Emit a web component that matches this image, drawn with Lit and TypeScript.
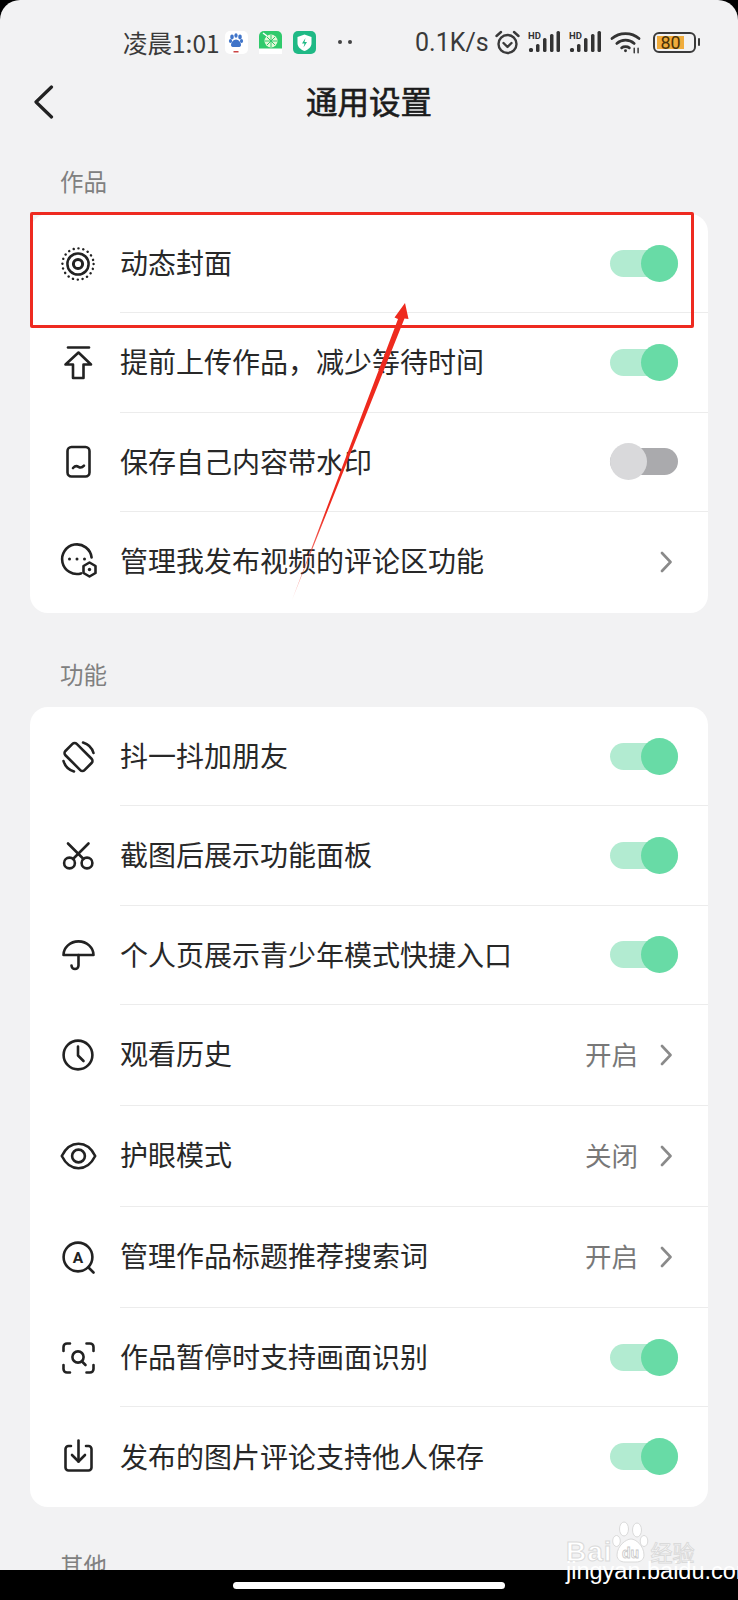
import { LitElement, html, css, svg } from 'lit';
import { customElement, property } from 'lit/decorators.js';

const ICONS: Record<string, unknown> = {
  live: svg`
    <circle cx="20" cy="20" r="15.6" stroke-width="2.4" stroke-dasharray="0.1 4.8" />
    <circle cx="20" cy="20" r="10.6" stroke-width="2.5" />
    <circle cx="20" cy="20" r="4.6" stroke-width="3" />`,
  upload: svg`
    <path d="M10 4.5H31" />
    <path d="M20.5 9.5L7.5 21.5H15V35H25.5V21.5H33Z" />`,
  phone: svg`
    <rect x="9.5" y="5" width="22" height="29.5" rx="4" />
    <path d="M15 26q2.7-3 5.5-1.2t5.5-1.2" />`,
  comment: svg`
    <path d="M23 31.4A14.8 14.8 0 1 1 33.6 15.5" />
    <circle cx="11.5" cy="17" r="1.5" fill="#222" stroke="none" />
    <circle cx="19" cy="17" r="1.5" fill="#222" stroke="none" />
    <circle cx="26.5" cy="17" r="1.5" fill="#222" stroke="none" />
    <path d="M31.5 20.5L37.5 24V31L31.5 34.5L25.5 31V24Z" />
    <circle cx="31.5" cy="27.5" r="1.7" fill="#222" stroke="none" />`,
  shake: svg`
    <rect x="12.5" y="6.5" width="16" height="27" rx="3" transform="rotate(-45 20.5 20)" />
    <path d="M25 5.5A15.5 15.5 0 0 1 35.5 16" />
    <path d="M5.5 24A15.5 15.5 0 0 0 16 34.5" />`,
  scissors: svg`
    <circle cx="11.5" cy="27" r="5.4" />
    <circle cx="29" cy="27" r="5.4" />
    <path d="M15 23L30.5 7.5" />
    <path d="M25.5 23L10 7.5" />`,
  umbrella: svg`
    <path d="M5.5 20A15 13.6 0 0 1 35.5 20Z" />
    <path d="M20.5 20V30.5a3.5 3.5 0 0 1-7 0" />`,
  clock: svg`
    <circle cx="20" cy="20" r="14.4" />
    <path d="M20 11.5V20.5L25.5 26" />`,
  eye: svg`
    <path d="M3.8 20C8 11.5 14 7.8 20.5 7.8S33 11.5 37.2 20C33 28.5 27 32.2 20.5 32.2S8 28.5 3.8 20Z" />
    <circle cx="20.5" cy="20" r="6.4" />`,
  searchA: svg`
    <circle cx="20" cy="20" r="14.4" />
    <path d="M30.5 30.5L35.5 35.5" />
    <text x="20" y="25.5" text-anchor="middle" font-size="15.5" font-weight="700" fill="#222" stroke="none" font-family="Roboto, sans-serif">A</text>`,
  scan: svg`
    <path d="M12 5.5H9a3.5 3.5 0 0 0-3.5 3.5V13" />
    <path d="M28.5 5.5H32a3.5 3.5 0 0 1 3.5 3.5V13" />
    <path d="M12 34.5H9a3.5 3.5 0 0 1-3.5-3.5V27" />
    <path d="M28.5 34.5H32a3.5 3.5 0 0 0 3.5-3.5V27" />
    <circle cx="20" cy="19" r="5.6" />
    <path d="M24 23.5L27.5 27" />`,
  download: svg`
    <path d="M13 9H10.5a3 3 0 0 0-3 3V30.5a3 3 0 0 0 3 3H30.5a3 3 0 0 0 3-3V12a3 3 0 0 0-3-3H28" />
    <path d="M20.5 3.5V24.5" />
    <path d="M14 18L20.5 24.5L27 18" />`,
};

const SIGNAL = svg`
  <text x="0" y="8" font-size="9.5" font-weight="700" fill="#333" font-family="Roboto, sans-serif">HD</text>
  <rect x="1" y="17" width="4" height="4" rx="1.5" />
  <rect x="8" y="13" width="3.5" height="8" rx="1.5" />
  <rect x="15" y="7" width="3.5" height="14" rx="1.5" />
  <rect x="22" y="3" width="3.5" height="18" rx="1.5" />
  <rect x="28.5" y="0" width="3.5" height="21" rx="1.5" />
`;

@customElement('app-switch')
export class AppSwitch extends LitElement {
  static styles = css`
    :host {
      display: block;
    }

    .track {
      position: relative;
      width: 68px;
      height: 27px;
      border-radius: 14px;
      background: #aaaaad;
    }

    .knob {
      position: absolute;
      top: -5px;
      left: 0;
      width: 37px;
      height: 37px;
      border-radius: 50%;
      background: #d9d9db;
    }

    .on {
      background: #b2ebd1;
    }

    .on .knob {
      left: 31px;
      background: #68dba6;
    }
  `;

  @property({ type: Boolean }) on = false;

  render() {
    return html`<div class="track ${this.on ? 'on' : ''}"><div class="knob"></div></div>`;
  }
}

@customElement('app-root')
export class AppRoot extends LitElement {
  static styles = css`
    :host {
      display: block;
      position: relative;
      width: 738px;
      height: 1600px;
      overflow: hidden;
      background: #000;
      font-family: 'Noto Sans CJK SC', 'Noto Sans', sans-serif;
      color: #222;
    }

    .screen {
      height: 1600px;
      overflow: hidden;
      border-radius: 20px;
      background: #f2f2f3;
    }

    .status {
      display: flex;
      align-items: center;
      height: 84px;
      padding-left: 123px;
      color: #3a3a3a;
    }

    .time {
      width: 102px;
      font-size: 24.5px;
      white-space: nowrap;
    }

    .app-icon {
      width: 23px;
      height: 23px;
      margin-right: 11px;
    }

    .dots {
      display: flex;
      gap: 6px;
      margin-left: 11px;
      margin-right: 63px;
    }

    .dots i {
      width: 4px;
      height: 4px;
      border-radius: 50%;
      background: #444;
    }

    .speed {
      width: 80px;
      font-family: Roboto, sans-serif;
      font-size: 25px;
      white-space: nowrap;
    }

    .alarm {
      width: 25px;
      height: 25px;
      margin-right: 8px;
    }

    .signal {
      width: 33px;
      height: 22px;
      margin-right: 8px;
      fill: #333;
    }

    .wifi {
      width: 31px;
      height: 24px;
      margin-right: 12px;
    }

    .battery {
      display: flex;
      align-items: center;
      gap: 2px;
    }

    .battery-body {
      display: flex;
      box-sizing: border-box;
      width: 43px;
      height: 21px;
      padding: 2px;
      border: 2px solid #3a3a3a;
      border-radius: 6px;
    }

    .battery-fill {
      width: 27px;
      background: #f0ac3c;
      color: #4a3208;
      font-family: Roboto, sans-serif;
      font-size: 18px;
      line-height: 13px;
      text-align: center;
      white-space: nowrap;
    }

    .battery-nub {
      width: 2px;
      height: 8px;
      border-radius: 1px;
      background: #3a3a3a;
    }

    .nav {
      position: relative;
      height: 36px;
      margin-bottom: 48px;
      text-align: center;
      font-size: 31.5px;
      line-height: 32px;
      -webkit-text-stroke: 0.6px #1c1c1c;
      color: #1c1c1c;
    }

    .back {
      position: absolute;
      left: 32px;
      top: 1px;
      width: 24px;
      height: 34px;
    }

    .label {
      height: 30px;
      margin-bottom: 16px;
      padding-left: 60px;
      color: #808080;
      font-size: 23.5px;
      line-height: 27px;
    }

    .card {
      margin: 0 30px 48px;
      overflow: hidden;
      border-radius: 18px;
      background: #fff;
    }

    .row {
      display: flex;
      align-items: center;
      gap: 22px;
      height: 99.33px;
      padding-left: 28px;
    }

    .row.link {
      height: 101px;
    }

    .row .icon {
      flex: none;
      width: 40px;
      height: 40px;
      fill: none;
      stroke: #222;
      stroke-width: 2.6;
      stroke-linecap: round;
      stroke-linejoin: round;
    }

    .body {
      display: flex;
      flex: 1;
      align-items: center;
      align-self: stretch;
      box-sizing: border-box;
      padding-right: 30px;
      border-bottom: 1px solid #ececec;
      color: #282828;
      font-size: 28px;
      white-space: nowrap;
    }

    .row:last-child .body {
      border-bottom: none;
    }

    .title {
      flex: 1;
      padding-bottom: 2px;
    }

    .link .title {
      padding-bottom: 4px;
    }

    .value {
      margin-right: 22px;
      padding-bottom: 2px;
      color: #787878;
      font-size: 26.5px;
    }

    .chevron {
      width: 12px;
      height: 22px;
      margin-right: 6px;
      fill: none;
      stroke: #8a8a8a;
      stroke-width: 2.6;
      stroke-linecap: round;
      stroke-linejoin: round;
    }

    .other {
      margin-top: -3px;
    }

    .home-bar {
      position: absolute;
      left: 0;
      right: 0;
      bottom: 0;
      display: flex;
      justify-content: center;
      height: 30px;
      padding-top: 12px;
      box-sizing: border-box;
      background: #000;
    }

    .home-bar i {
      width: 272px;
      height: 7px;
      border-radius: 4px;
      background: #fff;
    }

    .highlight {
      position: absolute;
      left: 30px;
      top: 212px;
      box-sizing: border-box;
      width: 664px;
      height: 116px;
      border: 3px solid #ee2a20;
      border-radius: 2px;
    }

    .arrow {
      position: absolute;
      left: 280px;
      top: 295px;
      width: 140px;
      height: 310px;
    }

    .watermark {
      position: absolute;
      left: 566px;
      top: 1520px;
      width: 134px;
    }

    .mark-line {
      display: flex;
      align-items: flex-end;
      height: 43px;
      color: #fff;
      font-family: 'Liberation Sans', sans-serif;
      font-size: 28px;
      font-weight: 700;
      line-height: 22px;
      letter-spacing: 1px;
      -webkit-text-stroke: 1px #dadada;
    }

    .mark-cjk {
      margin-left: 2px;
      font-family: 'Noto Sans CJK SC', sans-serif;
      font-size: 22px;
      line-height: 24px;
      font-weight: 400;
      letter-spacing: 0;
    }

    .paw {
      flex: none;
      width: 37px;
      height: 42px;
      margin-left: -1px;
    }

    .mark-url {
      color: #fff;
      font-family: 'Liberation Sans', sans-serif;
      font-size: 23.5px;
      line-height: 16px;
      white-space: nowrap;
    }
  `;

  section1 = [
    { icon: 'live', title: '动态封面', on: true },
    { icon: 'upload', title: '提前上传作品，减少等待时间', on: true },
    { icon: 'phone', title: '保存自己内容带水印', on: false },
    { icon: 'comment', title: '管理我发布视频的评论区功能', link: '' },
  ];

  section2 = [
    { icon: 'shake', title: '抖一抖加朋友', on: true },
    { icon: 'scissors', title: '截图后展示功能面板', on: true },
    { icon: 'umbrella', title: '个人页展示青少年模式快捷入口', on: true },
    { icon: 'clock', title: '观看历史', link: '开启' },
    { icon: 'eye', title: '护眼模式', link: '关闭' },
    { icon: 'searchA', title: '管理作品标题推荐搜索词', link: '开启' },
    { icon: 'scan', title: '作品暂停时支持画面识别', on: true },
    { icon: 'download', title: '发布的图片评论支持他人保存', on: true },
  ];

  renderRow(item: { icon: string; title: string; on?: boolean; link?: string }) {
    const isLink = item.link !== undefined;
    return html`
      <div class="row ${isLink ? 'link' : ''}">
        <svg class="icon" viewBox="0 0 40 40">${ICONS[item.icon]}</svg>
        <div class="body">
          <span class="title">${item.title}</span>
          ${isLink
            ? html`<span class="value">${item.link}</span>
                <svg class="chevron" viewBox="0 0 12 22"><path d="M2 2L10.5 11L2 20" /></svg>`
            : html`<app-switch ?on=${item.on}></app-switch>`}
        </div>
      </div>
    `;
  }

  renderStatus() {
    return html`
      <div class="status">
        <span class="time">凌晨1:01</span>
        <svg class="app-icon" viewBox="0 0 23 23">
          <rect width="23" height="23" rx="5" fill="#fff" />
          <g fill="#3f74c9">
            <ellipse cx="7" cy="6" rx="1.8" ry="2.4" />
            <ellipse cx="11" cy="4.5" rx="1.6" ry="2.2" />
            <ellipse cx="15" cy="6" rx="1.8" ry="2.4" />
            <ellipse cx="5.5" cy="10" rx="1.6" ry="2" />
            <ellipse cx="16.5" cy="10" rx="1.6" ry="2" />
            <path d="M11 8.5c2.5 0 5 3 5 5.5 0 1.5-1 2-2.5 2h-5C7 16 6 15.5 6 14c0-2.5 2.5-5.5 5-5.5Z" />
          </g>
          <rect x="8.5" y="20" width="5" height="1.5" fill="#c44" />
        </svg>
        <svg class="app-icon" viewBox="0 0 23 23">
          <rect width="23" height="23" rx="5" fill="#2fca6b" />
          <rect y="17.5" width="23" height="5.5" fill="#fff" />
          <circle cx="12" cy="10" r="6.5" fill="#e4f7d8" />
          <path d="M12 4v12M6 10h12M8 6l8 8M16 6l-8 8" stroke="#2fca6b" stroke-width="1" />
          <path d="M4 2l4 3" stroke="#fff" stroke-width="1.5" />
        </svg>
        <svg class="app-icon" viewBox="0 0 23 23">
          <rect width="23" height="23" rx="5" fill="#1fb985" />
          <path d="M11.5 3.5l7 2.5v6c0 4-3 6.5-7 8-4-1.5-7-4-7-8V6Z" fill="#fff" />
          <path d="M12.5 7l-3.5 5.5h2.5l-1 4 3.5-5.500h-2.500Z" fill="#1fb985" />
        </svg>
        <div class="dots"><i></i><i></i></div>
        <span class="speed">0.1K/s</span>
        <svg class="alarm" viewBox="0 0 25 25" fill="none" stroke="#3a3a3a" stroke-width="2.4" stroke-linecap="round" stroke-linejoin="round">
          <circle cx="12.5" cy="14" r="9" />
          <path d="M8.5 13L12.5 17L16.5 13" />
          <path d="M1.5 6L6 2M23.5 6L19 2" />
        </svg>
        <svg class="signal" viewBox="0 0 33 22">${SIGNAL}</svg>
        <svg class="signal" viewBox="0 0 33 22">${SIGNAL}</svg>
        <svg class="wifi" viewBox="0 0 32 24" fill="none" stroke="#333" stroke-width="2.8" stroke-linecap="round">
          <path d="M2 8.5C9.5 1.5 22.5 1.5 30 8.5" />
          <path d="M7 13.5C12 9 20 9 25 13.5" />
          <path d="M12 18C14 16.5 18 16.5 20 18" />
          <circle cx="16" cy="21" r="1.5" fill="#333" stroke="none" />
          <path d="M25 18.5V23M29 18.5V23" stroke-width="1.5" />
        </svg>
        <div class="battery">
          <div class="battery-body"><div class="battery-fill">80</div></div>
          <div class="battery-nub"></div>
        </div>
      </div>
    `;
  }

  render() {
    return html`
      <div class="screen">
        ${this.renderStatus()}
        <div class="nav">
          <svg class="back" viewBox="0 0 24 34" fill="none" stroke="#222" stroke-width="3.2" stroke-linecap="round" stroke-linejoin="round">
            <path d="M19.5 2L4 17L19.5 32" />
          </svg>
          通用设置
        </div>
        <div class="label">作品</div>
        <div class="card">${this.section1.map(item => this.renderRow(item))}</div>
        <div class="label">功能</div>
        <div class="card">${this.section2.map(item => this.renderRow(item))}</div>
        <div class="label other">其他</div>
      </div>

      <div class="home-bar"><i></i></div>

      <div class="highlight"></div>
      <svg class="arrow" viewBox="0 0 140 310">
        <defs>
          <linearGradient id="fade" x1="0" y1="1" x2="0" y2="0">
            <stop offset="0" stop-color="#ee2a1e" stop-opacity="0.35" />
            <stop offset="0.3" stop-color="#ee2a1e" />
          </linearGradient>
        </defs>
        <path d="M12 305L118 24L114.5 22.5L125 8L128.5 24L124.5 23.5Z" fill="url(#fade)" />
      </svg>

      <div class="watermark">
        <div class="mark-line">
          <span>Bai</span>
          <svg class="paw" viewBox="0 0 37 42" fill="#fff" stroke="#dadada" stroke-width="1">
            <ellipse cx="4.5" cy="20" rx="3.8" ry="5.5" />
            <ellipse cx="12" cy="8" rx="4.5" ry="7" />
            <ellipse cx="25" cy="9" rx="4.5" ry="7" />
            <ellipse cx="32" cy="20" rx="3.8" ry="5.5" />
            <path d="M19 18c5 0 13 7 13 16 0 5-4 7-8 7H13c-4 0-8-2-8-7 0-9 9-16 14-16Z" />
            <text x="18.5" y="37" text-anchor="middle" font-size="14" font-weight="700" letter-spacing="0" font-family="Liberation Sans, sans-serif" fill="#fff" stroke="#c9c9c9" stroke-width="0.8">du</text>
          </svg>
          <span class="mark-cjk">经验</span>
        </div>
        <div class="mark-url">jingyan.baidu.com</div>
      </div>
    `;
  }
}
